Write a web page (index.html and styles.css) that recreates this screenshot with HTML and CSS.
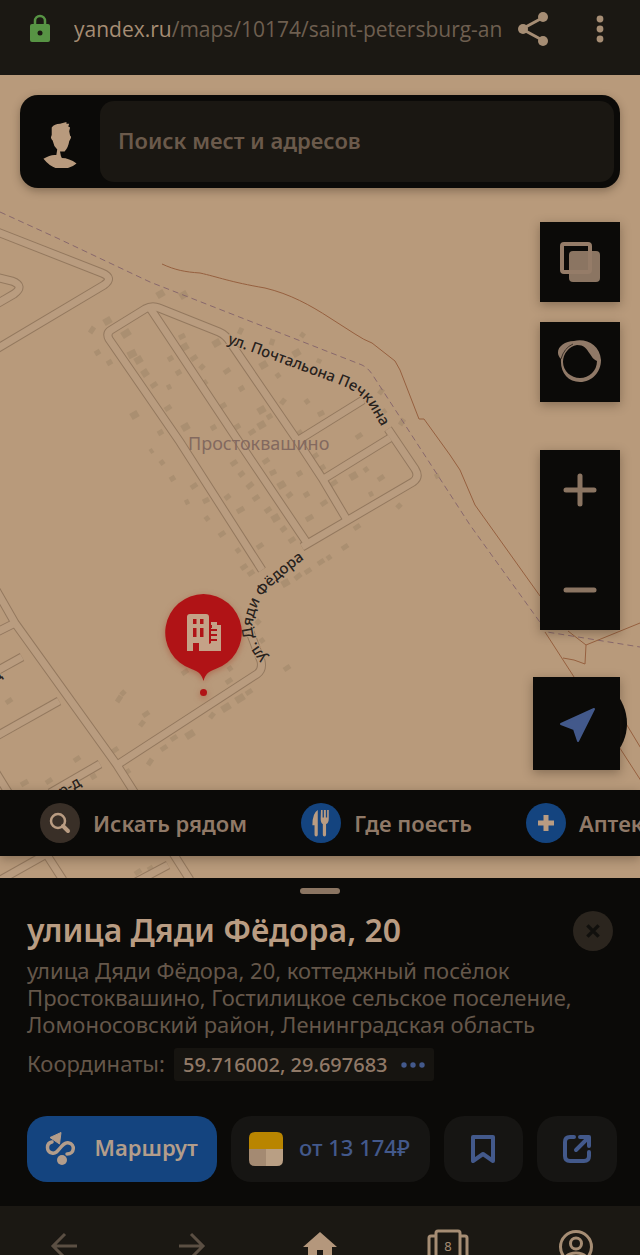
FILE: index.html
```html
<!DOCTYPE html>
<html lang="ru">
<head>
    <meta charset="UTF-8">
    <meta name="viewport" content="width=device-width, initial-scale=1.0">
    <title>улица Дяди Фёдора, 20</title>
    <link rel="stylesheet" href="styles.css">
</head>
<body>
    <header class="browser-bar">
        <svg class="lock" viewBox="0 0 24 30" width="24" height="30">
            <path d="M7 12V7a5 5 0 0 1 10 0v5" fill="none" stroke="#579344" stroke-width="2.5"/>
            <rect x="2" y="10" width="20" height="18" rx="2" fill="#579344"/>
            <circle cx="12" cy="19" r="2.5" fill="#1b1813"/>
        </svg>
        <div class="url"><span class="domain">yandex.ru</span>/maps/10174/saint-petersburg-an</div>
        <button class="bar-button" aria-label="Поделиться">
            <svg viewBox="0 0 34 36" width="34" height="36">
                <path d="M28 6L6 18l22 12" fill="none" stroke="#a68d74" stroke-width="3"/>
                <circle cx="27" cy="6" r="5"/><circle cx="7" cy="18" r="5"/><circle cx="27" cy="30" r="5"/>
            </svg>
        </button>
        <button class="bar-button" aria-label="Меню">
            <svg viewBox="0 0 8 30" width="8" height="30">
                <circle cx="4" cy="5" r="3.4"/><circle cx="4" cy="15" r="3.4"/><circle cx="4" cy="25" r="3.4"/>
            </svg>
        </button>
    </header>

    <main class="map">
        <svg class="map-canvas" viewBox="0 75 640 803" preserveAspectRatio="xMinYMin slice">
            <defs>
                <g id="roads">
                    <path d="M-5 231L102 273Q114 278 104 285L-5 350"/>
                    <path d="M-5 277L12 281Q25 286 14 294L-5 305"/>
                    <path d="M262 570L180 442L109 339Q106 333 111 330L145 309Q152 305 159 308L219 332Q226 335 230 342L297 440L322 478L347 520"/>
                    <path d="M150 308L233 433L307 543"/>
                    <path d="M297 441L363 400"/>
                    <path d="M322 480L390 438"/>
                    <path d="M388 429L415 469Q420 477 413 482L302 547"/>
                    <path d="M250 632L261 661Q263 670 257 674L117 765"/>
                    <path d="M-5 588L15 623L117 765L190 880"/>
                    <path d="M15 623L-5 633"/>
                    <path d="M22 657L-5 672"/>
                    <path d="M59 701L-5 737"/>
                    <path d="M100 764L50 793"/>
                    <path d="M-5 771L45 852L63 880"/>
                    <path d="M-5 883L75 838"/>
                    <path d="M168 865L136 882"/>
                </g>
                <path id="pechkina" d="M227 343L338 384Q360 392 370 407L392 445"/>
                <path id="fedora" d="M267 658C258 646 250 636 253 622C256 604 263 588 306 558"/>
            </defs>

            <!-- дома -->
            <path class="houses big" d="M157 296l7-4M180 297l7-4M104 323l7-4M122 336l8-5M131 417l7-4M128 356l8-4M135 362l7-4M142 375l6-4M181 349l7-4M213 345l7-4M258 412l7-4M258 427l7-4M293 355l7-4M260 367l7-4M278 487l7-4M182 429l7-4M272 520l7-4M350 478l7-4M282 585l7-4M186 737l8-5M236 701l8-5M222 710l8-5"/>
            <path class="houses" d="M90 333l4-6M95 354l5-3M107 364l5-3M151 387l6-4M167 388l4-2M165 410l6-4M158 434l5-3M150 452l3-2M160 464l4-3M170 480l5-3M191 488l6-4M179 338l6-3M191 360l6-4M168 360l5-3M200 369l4-4M176 374l5-3M203 384l4-3M224 373l6-4M239 390l5-3M221 407l5-3M211 429l5-3M235 428l5-3M267 418l5-3M249 434l6-4M239 334l3-6M271 345l2-6M301 337l3-4M276 377l4-3M281 404l4-5M305 403l4-3M263 463l6-4M270 474l6-3M231 465l6-4M239 476l5-4M247 488l6-5M287 497l5-4M297 475l5-3M304 496l5-3M225 499l5-4M253 500l6-4M298 434l4-3M312 458l6-4M318 415l6-3M356 438l6-4M379 394l4-5M382 413l4-3M400 425l4-6M318 363l2-4"/>
            <path class="houses" d="M203 502l6-3M185 503l4-2M205 520l4-3M219 536l6-4M237 512l7-4M236 552l4-3M257 548l6-4M241 569l6-4M248 575l6-4M265 512l6-4M281 531l5-4M289 542l6-4M306 520l7-4M321 505l6-4M331 485l6-4M279 487l6-4M320 469l5-3M316 537l6-4M342 549l6-4M318 564l6-4M327 559l4-3M305 573l6-4M295 579l6-5M354 529l6-4M284 670l6-4M226 683l6-4M228 670l4-3M246 694l6-4M210 718l4-5M171 740l6-4M161 750l6-4M148 765l4-6M121 695l4-4M117 702l4-6M143 716l6-4M140 726l4-5M112 752l6-4M74 761l6-4M124 774l6-4M91 778l5-3M182 674l6-4M260 642l4-3M256 624l4-4M364 471l4-3M378 480l6-4M369 495l4-2M397 508l4-4M435 477l4-2M6 703l6-4M21 785l7-4M46 783l6-4M135 874l6-4M148 870l5-3"/>

            <use href="#roads" class="road-edge"/>
            <use href="#roads" class="road-fill"/>

            <path class="border-line" d="M0 212L57 238L150 282L362 365Q368 368 372 374L470 525L547 632L640 647"/>
            <path class="trail" d="M162 264C175 270 185 272 200 273C218 277 230 282 265 288C290 294 310 305 330 318L355 334Q364 340 372 343L395 361L400 370L419 419H424L450 455L460 470L475 505L540 596"/>
            <path class="trail" d="M568 631L586 645L640 623M586 645L585 664Q574 659 563 658M545 632L645 787M622 717L645 755"/>

            <text class="place" x="188" y="450">Простоквашино</text>
            <text class="street"><textPath href="#pechkina">ул. Почтальона Печкина</textPath></text>
            <text class="street"><textPath href="#fedora">ул. Дяди Фёдора</textPath></text>
            <text class="street" text-anchor="end" transform="translate(82 785) rotate(-30)">пр-д</text>
            <text class="street" text-anchor="end" transform="translate(3 677) rotate(-30)">пр-д</text>

            <!-- метка -->
            <g class="pin">
                <path d="M203.500 594a38.500 38.500 0 0 1 12 75c-7 2.500-10 5-12 12c-2-7-5-9.500-12-12a38.500 38.500 0 0 1 12-75z"/>
                <circle cx="203.500" cy="692.500" r="3.500"/>
            </g>
            <path fill="#c4a287" fill-rule="evenodd" d="M190 614h16q3 0 3 3v27l2-1v-15h1v-3h-1v-3h6v3h4v26h-22v-8h-6v8h-6v-34q0-3 3-3zM193 619v5h3.500v-5zM200 619v5h3.500v-5zM193 628v9h3.500v-9zM200 628v9h3.500v-9zM211 629v2h6v-2zM211 634v2h6v-2zM211 639v2h6v-2z"/>
        </svg>

        <div class="overlay">
            <form class="search">
                <svg class="avatar" viewBox="0 0 40 50" width="80" height="46">
                    <path fill="#b89a7d" d="M11 6q3-4 9-4l7-2v2l3 0-1 3 2 1-1 4 1 5q2 1 0 4l-1 2q-1 7-5 11h-5l1 5 1 2q8 0 16 6q-7 6-17 6T2 40q8-5 14-4l1-6q-4-4-5-10-3-2-1-6z"/>
                </svg>
                <input class="search-input" type="text" placeholder="Поиск мест и адресов" aria-label="Поиск мест и адресов">
            </form>

            <div class="controls">
                <button type="button" class="control" aria-label="Слои">
                    <svg viewBox="0 0 42 42" width="42" height="42">
                        <rect x="10" y="10" width="31" height="31" rx="4" fill="#8b7562"/>
                        <rect x="3" y="3" width="28" height="28" rx="2" fill="none" stroke="#957c68" stroke-width="4"/>
                    </svg>
                </button>
                <button type="button" class="control" aria-label="Панорамы">
                    <svg viewBox="-1 1 50 44" width="50" height="44">
                        <path fill="#907967" fill-rule="evenodd" d="M5 20C-3 12 6 2 18 2C30-1 44 6 45 21C45 33 36 43 24 43S4 34 5 20zM21 6C13 7 7 15 7 23C7 32 15 39 24 39C33 39 41 32 41 22C37 20 36 18 34 15C30 9 28 6 21 6z"/>
                        <path fill="none" stroke="#3b3129" d="M5 20Q8 9 17 5"/>
                    </svg>
                </button>
                <div class="zoom">
                    <button type="button" class="zoom-button" aria-label="Приблизить">
                        <svg viewBox="0 0 34 34" width="34" height="34"><path d="M3 17h28M17 3v28"/></svg>
                    </button>
                    <button type="button" class="zoom-button" aria-label="Отдалить">
                        <svg viewBox="0 0 34 34" width="34" height="34"><path d="M3 17h28"/></svg>
                    </button>
                </div>
                <button type="button" class="control locate" aria-label="Моё местоположение">
                    <svg viewBox="0 0 36 36" width="36" height="36"><path fill="#43598b" stroke="#43598b" stroke-width="2" stroke-linejoin="round" d="M35 3L19 35l-4-12L2 18z"/></svg>
                </button>
            </div>

            <nav class="chips">
                <a class="chip" href="#nearby">
                    <span class="chip-icon gray">
                        <svg viewBox="0 0 24 24" width="24" height="24"><circle cx="10" cy="10" r="7" fill="none" stroke="#b99c82" stroke-width="2.500"/><path d="M15 15l5 5" stroke="#b99c82" stroke-width="4" stroke-linecap="round"/></svg>
                    </span>
                    Искать рядом
                </a>
                <a class="chip" href="#food">
                    <span class="chip-icon">
                        <svg viewBox="0 0 24 26" width="26" height="28" fill="#b99c82"><path d="M9 1v23a1.500 1.500 0 0 1-3 0v-9H4q0-11 5-14zM12 1h1.500v7h1.200V1h1.800v7h1.200V1h1.500v8q0 4-2.500 5v10a1.500 1.500 0 0 1-3 0V14q-2-1-2-5z"/></svg>
                    </span>
                    Где поесть
                </a>
                <a class="chip" href="#pharmacy">
                    <span class="chip-icon">
                        <svg viewBox="0 0 24 24" width="24" height="24"><path d="M12 4v16M4 12h16" stroke="#b99c82" stroke-width="5"/></svg>
                    </span>
                    Аптеки
                </a>
            </nav>
        </div>
    </main>

    <section class="sheet">
        <div class="handle"></div>
        <div class="sheet-body">
            <div class="title-row">
                <h1 class="title">улица Дяди Фёдора, 20</h1>
                <button class="close" aria-label="Закрыть">
                    <svg viewBox="0 0 16 16" width="18" height="18"><path d="M3 3l10 10M13 3L3 13" stroke="#11100d" stroke-width="3"/></svg>
                </button>
            </div>
            <p class="address">улица Дяди Фёдора, 20, коттеджный посёлок Простоквашино, Гостилицкое сельское поселение, Ломоносовский район, Ленинградская область</p>
            <div class="coords">
                <span class="coords-label">Координаты:</span>
                <button class="coords-value">59.716002, 29.697683
                    <svg viewBox="0 0 24 6" width="24" height="6" fill="#43598b"><circle cx="3" cy="3" r="2.700"/><circle cx="12" cy="3" r="2.700"/><circle cx="21" cy="3" r="2.700"/></svg>
                </button>
            </div>
            <div class="actions">
                <button class="action route">
                    <svg viewBox="0 0 34 36" width="34" height="36">
                        <path d="M8 11C2 12 2 21 8 22C15 24 17 10 25 12C31 13 31 23 23 23" fill="none" stroke="#b39d8b" stroke-width="3.500" stroke-linecap="round"/>
                        <path d="M17 1.500L15.500 13L6 6.500z" fill="#b39d8b" stroke="#b39d8b" stroke-linejoin="round"/>
                        <circle cx="18" cy="29" r="5" fill="#b39d8b"/>
                    </svg>
                    <span>Маршрут</span>
                </button>
                <button class="action taxi">
                    <svg viewBox="0 0 34 34" width="34" height="34">
                        <path d="M0 17V6q0-6 6-6h22q6 0 6 6v11z" fill="#b98500"/>
                        <path d="M0 17h17v17H6q-6 0-6-6z" fill="#a48a72"/>
                        <path d="M17 17h17v11q0 6-6 6H17z" fill="#b99f84"/>
                    </svg>
                    <span>от 13 174₽</span>
                </button>
                <button class="action square" aria-label="Сохранить">
                    <svg viewBox="0 0 28 30" width="28" height="30"><path d="M4 3h20v24l-10-7-10 7z"/></svg>
                </button>
                <button class="action square" aria-label="Отправить">
                    <svg viewBox="0 0 30 30" width="30" height="30"><path d="M12 3H8Q3 3 3 8v14q0 5 5 5h14q5 0 5-5v-4M14 16L26 4M18 3h9v9"/></svg>
                </button>
            </div>
        </div>
    </section>

    <nav class="bottom-bar">
        <button class="nav-button" aria-label="Назад">
            <svg viewBox="0 0 30 34" width="30" height="34"><path d="M28 17H4M16 5L4 17l12 12" stroke="#5b4f43"/></svg>
        </button>
        <button class="nav-button" aria-label="Вперёд">
            <svg viewBox="0 0 30 34" width="30" height="34"><path d="M2 17h24M14 5l12 12-12 12" stroke="#5b4f43"/></svg>
        </button>
        <button class="nav-button" aria-label="Домой">
            <svg viewBox="0 0 34 34" width="34" height="34"><path fill="#b4977c" stroke="none" d="M17 3l17 15h-5v14h-9V21h-6v11H5V18H0z"/></svg>
        </button>
        <button class="nav-button" aria-label="Вкладки">
            <svg viewBox="0 0 42 38" width="42" height="38">
                <path d="M9 36V4q0-2 2-2h20q2 0 2 2v32M9 7H4q-2 0-2 2v27M33 7h5q2 0 2 2v27"/>
                <text x="21" y="22" text-anchor="middle">8</text>
            </svg>
        </button>
        <button class="nav-button" aria-label="Профиль">
            <svg viewBox="0 0 36 36" width="36" height="36"><circle cx="18" cy="18" r="15.500"/><circle cx="18" cy="14.500" r="5.500"/><path d="M7 29q3-5 11-5t11 5"/></svg>
        </button>
    </nav>
</body>
</html>
```

FILE: styles.css
```css
* {
    box-sizing: border-box;
}

body {
    margin: 0;
    height: 100vh;
    display: flex;
    flex-direction: column;
    overflow: hidden;
    background: #0b0a08;
    color: #b99c82;
    font-family: "Noto Sans", "Open Sans", sans-serif;
    font-size: 22px;
}

button {
    border: none;
    padding: 0;
    background: none;
    color: inherit;
    font: inherit;
    cursor: pointer;
}

svg {
    display: block;
    flex: none;
}

/* адресная строка */
.browser-bar {
    flex: none;
    display: flex;
    align-items: center;
    height: 75px;
    padding: 0 36px 18px 28px;
    background: #1b1813;
}

.url {
    flex: 1;
    min-width: 0;
    margin: 0 8px 0 22px;
    overflow: hidden;
    white-space: nowrap;
    color: #6e5f50;
    font-family: "Open Sans", "Noto Sans", sans-serif;
    font-size: 21px;
}

.domain {
    color: #a68d74;
}

.bar-button {
    fill: #a68d74;
}

.bar-button + .bar-button {
    margin-left: 46px;
}

/* карта */
.map {
    flex: 1;
    min-height: 0;
    display: grid;
    grid-template: minmax(0, 1fr) / minmax(0, 1fr);
    overflow: hidden;
    background: #b89a7b;
}

.map-canvas,
.overlay {
    grid-area: 1 / 1;
    width: 100%;
    height: 100%;
}

.houses {
    fill: none;
    stroke: #aa8f71;
    stroke-width: 5px;
}

.houses.big {
    stroke-width: 7px;
}

.road-edge {
    fill: none;
    stroke: #94795f;
    stroke-width: 9px;
}

.road-fill {
    fill: none;
    stroke: #b99c7f;
    stroke-width: 7px;
}

.border-line {
    fill: none;
    stroke: #88686c;
    stroke-dasharray: 6 4;
}

.trail {
    fill: none;
    stroke: #96603f;
}

.place {
    fill: #83695f;
    font-size: 18px;
}

.street {
    fill: #28221c;
    font-size: 15px;
    font-weight: 500;
    paint-order: stroke;
    stroke: #b99c7f;
    stroke-width: 2px;
}

.pin {
    fill: #b01316;
    filter: drop-shadow(0 2px 3px #a0402880);
}

.overlay {
    isolation: isolate;
    display: flex;
    flex-direction: column;
    padding: 20px 0 22px;
}

.search {
    flex: none;
    display: flex;
    align-items: center;
    height: 93px;
    margin: 0 20px;
    padding: 6px;
    padding-left: 0;
    border-radius: 18px;
    background: #0b0a08;
    box-shadow: 0 3px 8px #33241760;
}

.avatar {
    margin-top: 6px;
}

.search-input {
    flex: 1;
    min-width: 0;
    height: 100%;
    padding: 0 18px 4px;
    border: none;
    border-radius: 14px;
    outline: none;
    background: #1a1712;
    color: #b99c82;
    font: inherit;
    font-weight: 600;
}

.search-input::placeholder {
    color: #6b5a4b;
    opacity: 1;
}

.controls {
    display: flex;
    flex-direction: column;
    align-items: flex-end;
    padding: 34px 20px 0;
}

.control {
    display: grid;
    place-items: center;
    width: 80px;
    height: 80px;
    margin-bottom: 20px;
    background: #0b0a08;
    box-shadow: 0 3px 10px #33241760;
}

.zoom {
    display: flex;
    flex-direction: column;
    justify-content: space-between;
    margin-top: 28px;
    background: #0b0a08;
    box-shadow: 0 3px 10px #33241760;
}

.zoom-button {
    display: grid;
    place-items: center;
    width: 80px;
    height: 80px;
    fill: none;
    stroke: #8b7562;
    stroke-width: 5px;
    stroke-linecap: round;
}

.zoom-button + .zoom-button {
    margin-top: 20px;
}

.locate {
    position: relative;
    width: 87px;
    height: 93px;
    margin: 47px 0 0;
}

/* круглая подложка выступает за край кнопки */
.locate::before {
    content: "";
    position: absolute;
    top: 0;
    right: -7px;
    z-index: -1;
    width: 93px;
    height: 93px;
    border-radius: 50%;
    background: #0b0a08;
}

.chips {
    flex: none;
    display: flex;
    align-items: center;
    gap: 54px;
    height: 66px;
    margin-top: auto;
    padding-left: 40px;
    overflow: hidden;
    background: #0b0a08;
    box-shadow: 0 3px 10px #33241760;
}

.chip {
    display: flex;
    align-items: center;
    gap: 13px;
    white-space: nowrap;
    color: #907967;
    font-weight: 600;
    text-decoration: none;
}

.chip-icon {
    display: grid;
    place-items: center;
    width: 40px;
    height: 40px;
    border-radius: 50%;
    background: #14447f;
}

.chip-icon.gray {
    background: #392f27;
}

/* карточка адреса */
.sheet {
    flex: none;
    padding: 10px 0 24px;
}

.sheet-body {
    padding: 0 23px 0 27px;
}

.handle {
    width: 40px;
    height: 6px;
    margin: 0 auto;
    border-radius: 3px;
    background: #8b7562;
}

.title-row {
    display: flex;
    align-items: center;
    justify-content: space-between;
    height: 40px;
    margin: 17px 4px 6px 0;
}

.title {
    margin: 0;
    padding-bottom: 2px;
    font-size: 32px;
    font-weight: 600;
    line-height: 38px;
}

.close {
    display: grid;
    place-items: center;
    width: 40px;
    height: 40px;
    border-radius: 50%;
    background: #2b251e;
}

.address {
    margin: 0;
    color: #65574a;
    line-height: 27px;
}

.coords {
    display: flex;
    align-items: center;
    gap: 9px;
    height: 33px;
    margin: 10px 0 35px;
    color: #65574a;
}

.coords-label {
    padding-bottom: 4px;
}

.coords-value {
    display: flex;
    align-items: center;
    gap: 13px;
    height: 33px;
    padding: 0 9px;
    border-radius: 3px;
    background: #161410;
    color: #907967;
    font-size: 20px;
    font-weight: 500;
}

.actions {
    display: grid;
    grid-template-columns: 191fr 199fr 80fr 80fr;
    gap: 14px;
}

.action {
    display: flex;
    align-items: center;
    justify-content: center;
    height: 66px;
    border-radius: 20px;
    background: #161513;
    color: #43598b;
    font-weight: 500;
    white-space: nowrap;
}

.action span {
    padding-bottom: 4px;
}

.route {
    gap: 16px;
    padding-right: 2px;
    background: #14447f;
    color: #b39d8b;
    font-weight: 600;
}

.taxi {
    gap: 16px;
    padding-right: 2px;
}

.square {
    fill: none;
    stroke: #43598b;
    stroke-width: 4px;
    stroke-linejoin: round;
    stroke-linecap: round;
}

/* нижняя панель браузера */
.bottom-bar {
    flex: none;
    display: grid;
    grid-template-columns: repeat(5, 1fr);
    height: 49px;
    padding-top: 23px;
    overflow: hidden;
    background: #1b1813;
}

.nav-button {
    display: flex;
    justify-content: center;
    align-items: flex-start;
    fill: none;
    stroke: #a68d74;
    stroke-width: 3px;
}

.nav-button text {
    fill: #a68d74;
    stroke: none;
    font-size: 13px;
}
```
